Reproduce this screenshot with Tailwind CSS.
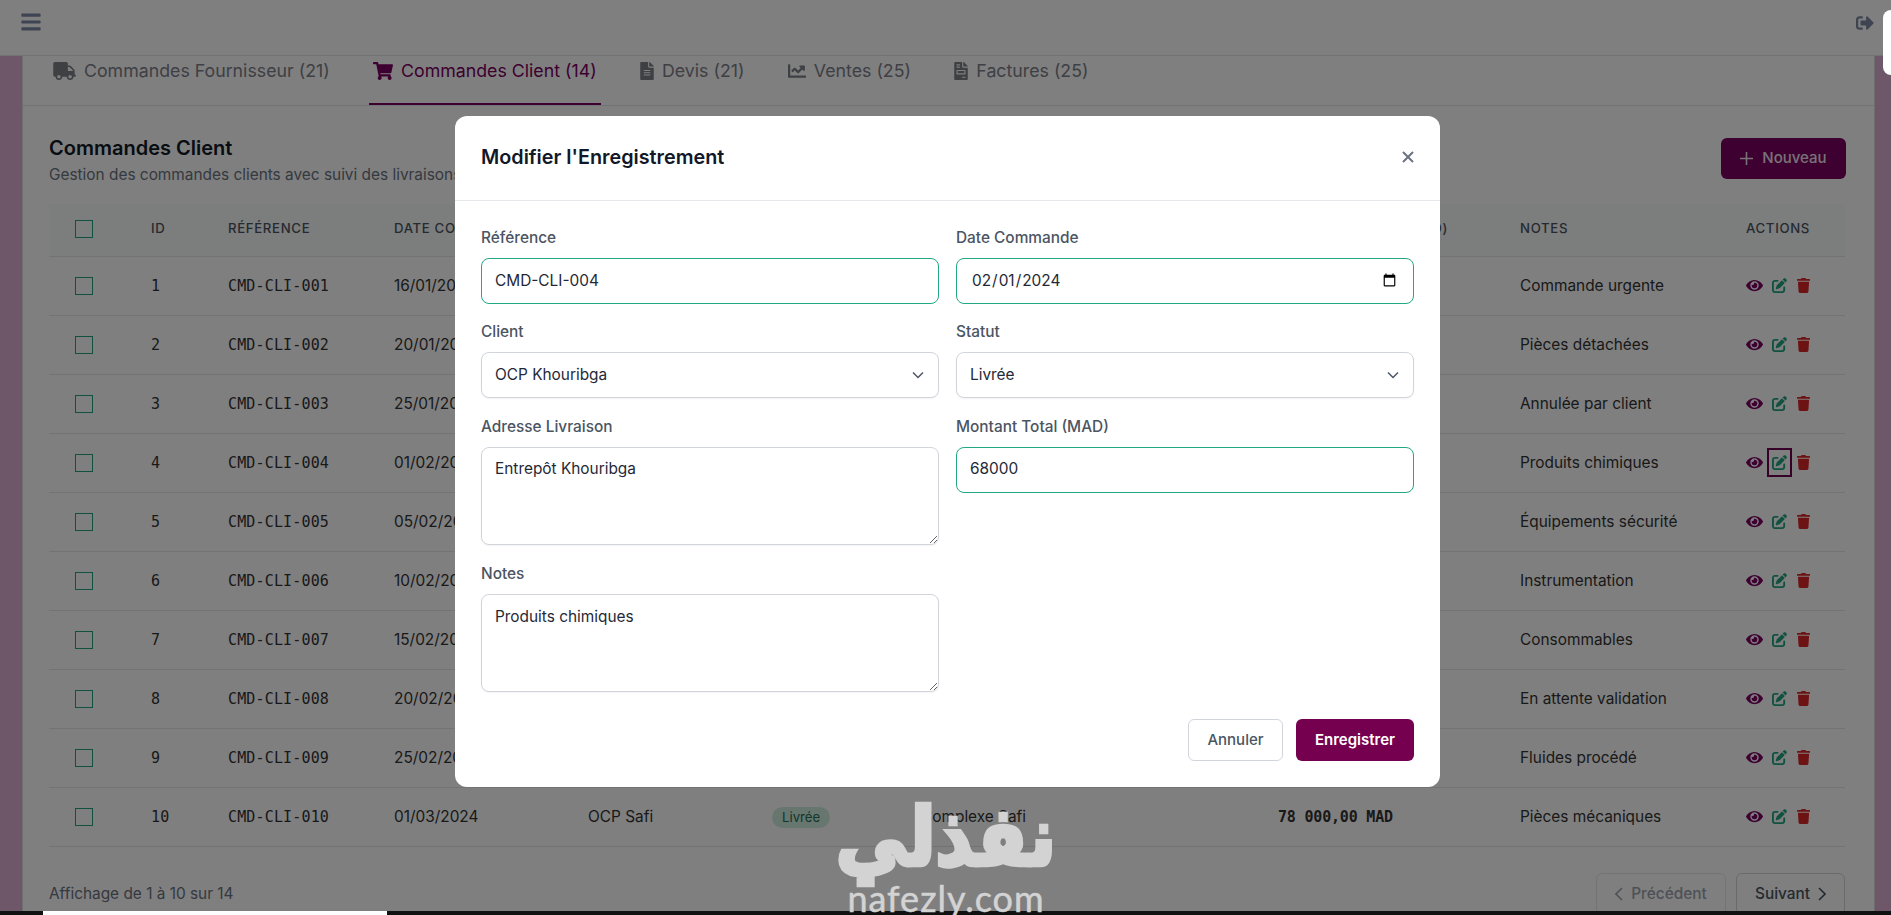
<!DOCTYPE html>
<html lang="fr">
<head>
    <meta charset="UTF-8">
    <meta name="viewport" content="width=device-width, initial-scale=1.0">
    <title>Commandes Client</title>
    <script src="https://cdn.jsdelivr.net/npm/@tailwindcss/browser@4"></script>
</head>
<body class="relative h-[915px] overflow-hidden bg-[#dcaed2] font-['Inter',sans-serif] text-[#374151]">
    <!-- icons -->
    <svg class="hidden">
        <symbol id="i-bars" viewBox="0 0 448 512"><path fill="currentColor" d="M16 132h416c8.837 0 16-7.163 16-16V76c0-8.837-7.163-16-16-16H16C7.163 60 0 67.163 0 76v40c0 8.837 7.163 16 16 16zm0 160h416c8.837 0 16-7.163 16-16v-40c0-8.837-7.163-16-16-16H16c-8.837 0-16 7.163-16 16v40c0 8.837 7.163 16 16 16zm0 160h416c8.837 0 16-7.163 16-16v-40c0-8.837-7.163-16-16-16H16c-8.837 0-16 7.163-16 16v40c0 8.837 7.163 16 16 16z"/></symbol>
        <symbol id="i-signout" viewBox="0 0 512 512"><path fill="currentColor" d="M497 273L329 441c-15 15-41 4.500-41-17v-96H152c-13.300 0-24-10.700-24-24v-96c0-13.300 10.700-24 24-24h136V88c0-21.400 25.900-32 41-17l168 168c9.300 9.400 9.300 24.600 0 34zM192 436v-40c0-6.600-5.400-12-12-12H96c-17.700 0-32-14.300-32-32V160c0-17.700 14.300-32 32-32h84c6.600 0 12-5.400 12-12V76c0-6.600-5.400-12-12-12H96c-53 0-96 43-96 96v192c0 53 43 96 96 96h84c6.600 0 12-5.400 12-12z"/></symbol>
        <symbol id="i-truck" viewBox="0 0 640 512"><path fill="currentColor" d="M624 352h-16V243.900c0-12.700-5.100-24.900-14.100-33.900L494 110.100c-9-9-21.200-14.100-33.900-14.100H416V48c0-26.500-21.500-48-48-48H48C21.500 0 0 21.500 0 48v320c0 26.500 21.500 48 48 48h16c0 53 43 96 96 96s96-43 96-96h128c0 53 43 96 96 96s96-43 96-96h48c8.800 0 16-7.200 16-16v-32c0-8.800-7.200-16-16-16zM160 464c-26.500 0-48-21.500-48-48s21.500-48 48-48 48 21.500 48 48-21.500 48-48 48zm320 0c-26.500 0-48-21.500-48-48s21.500-48 48-48 48 21.500 48 48-21.500 48-48 48zm80-208H416V144h44.100l99.900 99.900V256z"/></symbol>
        <symbol id="i-cart" viewBox="0 0 576 512"><path fill="currentColor" d="M528.120 301.319l47.273-208C578.806 78.301 567.391 64 551.990 64H159.208l-9.166-44.810C147.758 8.021 137.930 0 126.529 0H24C10.745 0 0 10.745 0 24v16c0 13.255 10.745 24 24 24h69.883l70.248 343.435C147.325 417.100 136 435.222 136 456c0 30.928 25.072 56 56 56s56-25.072 56-56c0-15.674-6.447-29.835-16.824-40h209.647C430.447 426.165 424 440.326 424 456c0 30.928 25.072 56 56 56s56-25.072 56-56c0-22.172-12.888-41.332-31.579-50.405l5.517-24.276c3.413-15.018-8.002-29.319-23.403-29.319H218.117l-6.545-32h293.145c11.206 0 20.920-7.754 23.403-18.681z"/></symbol>
        <symbol id="i-file" viewBox="0 0 384 512"><path fill="currentColor" d="M224 136V0H24C10.700 0 0 10.700 0 24v464c0 13.300 10.700 24 24 24h336c13.300 0 24-10.700 24-24V160H248c-13.200 0-24-10.800-24-24zm64 236c0 6.600-5.400 12-12 12H108c-6.600 0-12-5.400-12-12v-8c0-6.600 5.400-12 12-12h168c6.600 0 12 5.400 12 12v8zm0-64c0 6.600-5.400 12-12 12H108c-6.600 0-12-5.400-12-12v-8c0-6.600 5.400-12 12-12h168c6.600 0 12 5.400 12 12v8zm0-72v8c0 6.600-5.400 12-12 12H108c-6.600 0-12-5.400-12-12v-8c0-6.600 5.400-12 12-12h168c6.600 0 12 5.400 12 12zm96-114.100v6.100H256V0h6.100c6.400 0 12.500 2.500 17 7l97.900 98c4.500 4.500 7 10.600 7 16.900z"/></symbol>
        <symbol id="i-chart" viewBox="0 0 512 512"><path fill="currentColor" d="M496 384H64V80c0-8.840-7.160-16-16-16H16C7.160 64 0 71.160 0 80v336c0 17.670 14.330 32 32 32h464c8.840 0 16-7.160 16-16v-32c0-8.840-7.160-16-16-16zM464 96H345.940c-21.380 0-32.090 25.850-16.970 40.970l32.400 32.400L288 242.750l-73.370-73.370c-12.500-12.500-32.760-12.500-45.250 0l-68.690 68.690c-6.250 6.250-6.250 16.380 0 22.630l22.620 22.620c6.250 6.250 16.380 6.250 22.630 0L192 237.250l73.370 73.370c12.500 12.500 32.760 12.500 45.250 0l96-96 32.400 32.400c15.120 15.120 40.970 4.410 40.970-16.970V112c0-8.840-7.160-16-16-16z"/></symbol>
        <symbol id="i-invoice" viewBox="0 0 384 512"><path fill="currentColor" d="M288 256H96v64h192v-64zm89-151L279.100 7c-4.500-4.500-10.600-7-17-7H256v128h128v-6.100c0-6.300-2.500-12.400-7-16.900zm-153 31V0H24C10.700 0 0 10.700 0 24v464c0 13.300 10.700 24 24 24h336c13.300 0 24-10.700 24-24V160H248c-13.200 0-24-10.800-24-24zM64 72c0-4.420 3.580-8 8-8h80c4.420 0 8 3.580 8 8v16c0 4.420-3.580 8-8 8H72c-4.420 0-8-3.580-8-8V72zm0 64c0-4.420 3.580-8 8-8h80c4.420 0 8 3.580 8 8v16c0 4.420-3.580 8-8 8H72c-4.420 0-8-3.580-8-8v-16zm256 304c0 4.420-3.580 8-8 8h-80c-4.420 0-8-3.580-8-8v-16c0-4.420 3.580-8 8-8h80c4.420 0 8 3.580 8 8v16zm0-200v96c0 8.840-7.160 16-16 16H80c-8.840 0-16-7.160-16-16v-96c0-8.840 7.160-16 16-16h224c8.840 0 16 7.160 16 16z"/></symbol>
        <symbol id="i-eye" viewBox="0 0 576 512"><path fill="currentColor" d="M572.520 241.400C518.290 135.590 410.930 64 288 64S57.680 135.640 3.480 241.410a32.350 32.350 0 0 0 0 29.190C57.710 376.410 165.070 448 288 448s230.320-71.640 284.520-177.410a32.350 32.350 0 0 0 0-29.190zM288 400a144 144 0 1 1 144-144 143.930 143.930 0 0 1-144 144zm0-240a95.310 95.310 0 0 0-25.310 3.790 47.850 47.850 0 0 1-66.900 66.900A95.780 95.780 0 1 0 288 160z"/></symbol>
        <symbol id="i-edit" viewBox="0 0 512 512"><path fill="currentColor" d="M471.600 21.700c-21.900-21.900-57.300-21.900-79.200 0L362.300 51.700l97.900 97.900 30.100-30.100c21.900-21.900 21.900-57.300 0-79.200L471.600 21.700zm-299.200 220c-6.100 6.100-10.800 13.600-13.500 21.900l-29.600 88.800c-2.900 8.600-.6 18.100 5.800 24.600s15.900 8.700 24.600 5.800l88.800-29.600c8.200-2.700 15.700-7.400 21.900-13.500L437.700 172.300 339.700 74.300 172.400 241.700zM96 64C43 64 0 107 0 160V416c0 53 43 96 96 96H352c53 0 96-43 96-96V320c0-17.700-14.300-32-32-32s-32 14.300-32 32v96c0 17.700-14.300 32-32 32H96c-17.700 0-32-14.300-32-32V160c0-17.700 14.300-32 32-32h96c17.700 0 32-14.300 32-32s-14.300-32-32-32H96z"/></symbol>
        <symbol id="i-trash" viewBox="0 0 448 512"><path fill="currentColor" d="M432 32H312l-9.400-18.700A24 24 0 0 0 281.100 0H166.800a23.720 23.720 0 0 0-21.400 13.300L136 32H16A16 16 0 0 0 0 48v32a16 16 0 0 0 16 16h416a16 16 0 0 0 16-16V48a16 16 0 0 0-16-16zM53.200 467a48 48 0 0 0 47.900 45h245.800a48 48 0 0 0 47.900-45L416 128H32z"/></symbol>
    </svg>

    <!-- page behind the dialog -->
    <header class="h-[56px] bg-white border-b border-[#e5e5e5] flex items-start justify-between pl-[21px] pr-[17px]">
        <svg class="w-[20px] h-[22px] mt-[11px] text-[#7e88a4]"><use href="#i-bars"/></svg>
        <svg class="w-[18px] h-[18px] mt-[14px] text-[#7e88a4]"><use href="#i-signout"/></svg>
    </header>

    <main class="ml-[22px] w-[1853px] h-[859px] bg-white border-x border-[#dcdcdc]">
        <nav class="h-[50px] border-b border-[#e5e7eb] flex gap-[35.400px] pl-[26px]">
            <a class="flex items-start gap-[8px] px-1 pt-[3px] -mt-px h-[50px] text-[17.750px] text-[#7c8089]"><svg class="w-[23px] h-[18px] mt-[4px]"><use href="#i-truck"/></svg>Commandes Fournisseur (21)</a>
            <a class="flex items-start gap-[8px] px-1 pt-[3px] -mt-px h-[50px] text-[17.750px] text-[#7a0060] border-b-2 border-[#7a0060]"><svg class="w-[20px] h-[18px] mt-[4px]"><use href="#i-cart"/></svg>Commandes Client (14)</a>
            <a class="flex items-start gap-[8px] px-1 pt-[3px] -mt-px h-[50px] text-[17.750px] text-[#7c8089]"><svg class="w-[14px] h-[18px] mt-[4px]"><use href="#i-file"/></svg>Devis (21)</a>
            <a class="flex items-start gap-[8px] px-1 pt-[3px] -mt-px h-[50px] text-[17.750px] text-[#7c8089]"><svg class="w-[18px] h-[18px] mt-[4px]"><use href="#i-chart"/></svg>Ventes (25)</a>
            <a class="flex items-start gap-[8px] px-1 pt-[3px] -mt-px h-[50px] text-[17.750px] text-[#7c8089]"><svg class="w-[14px] h-[18px] mt-[4px]"><use href="#i-invoice"/></svg>Factures (25)</a>
        </nav>

        <section class="px-[26px] pt-[28px]">
            <div class="flex items-center justify-between mb-[19px] pr-[2px]">
                <div>
                    <h2 class="text-[20px] leading-[28px] font-semibold text-[#111827]">Commandes Client</h2>
                    <p class="mt-[3px] text-[15.400px] leading-[20px] text-[#6b7280]">Gestion des commandes clients avec suivi des livraisons</p>
                </div>
                <button class="h-[41px] w-[125px] mb-[2px] rounded-md bg-[#7a0060] text-white/90 text-[15px] font-medium flex items-center justify-center gap-[9px]">
                    <svg class="w-[13px] h-[13px]" viewBox="0 0 13 13" fill="none" stroke="currentColor" stroke-width="1.600"><path d="M6.500 0v13M0 6.500h13"/></svg>
                    Nouveau
                </button>
            </div>

            <table class="table-fixed w-[1796px] text-[15.400px] text-[#333333]">
                <colgroup>
                    <col class="w-[102px]"><col class="w-[77px]"><col class="w-[166px]"><col class="w-[194px]"><col class="w-[184px]"><col class="w-[149px]"><col class="w-[357px]"><col class="w-[242px]"><col class="w-[226px]"><col class="w-[99px]">
                </colgroup>
                <thead>
                    <tr class="h-[52px] bg-[#f9fafb] border-b border-[#e5e7eb] text-left text-[13.200px] uppercase tracking-[0.05em] text-[#4b5563]">
                        <th class="pl-[26px] pb-[2px]"><span class="block w-[18px] h-[18px] border border-[#22a37f]"></span></th>
                        <th class="font-medium pb-[2px]">ID</th>
                        <th class="font-medium pb-[2px]">Référence</th>
                        <th class="font-medium pb-[2px]">Date Commande</th>
                        <th class="font-medium pb-[2px]">Client</th>
                        <th class="font-medium pb-[2px]">Statut</th>
                        <th class="font-medium pb-[2px]">Adresse Livraison</th>
                        <th class="font-medium pb-[2px]">Montant Total (MAD)</th>
                        <th class="font-medium pb-[2px]">Notes</th>
                        <th class="font-medium pb-[2px]">Actions</th>
                    </tr>
                </thead>
                <tbody id="rows"></tbody>
            </table>

            <div class="mt-[26px] flex items-center justify-between pr-[3px]">
                <p class="text-[15.400px] text-[#6b7280]">Affichage de 1 à 10 sur 14</p>
                <div class="flex gap-[10px]">
                    <button class="h-[42px] w-[130px] rounded-md border border-[#e5e7eb] text-[15.400px] font-medium text-[#9ca3af] flex items-center justify-center gap-[8px]">
                        <svg class="w-[8px] h-[14px]" viewBox="0 0 8 14" fill="none" stroke="currentColor" stroke-width="1.600"><path d="M7 1 1 7l6 6"/></svg>
                        Précédent
                    </button>
                    <button class="h-[42px] w-[109px] rounded-md border border-[#d1d5db] text-[15.400px] font-medium text-[#4b5563] flex items-center justify-center gap-[8px]">
                        Suivant
                        <svg class="w-[8px] h-[14px]" viewBox="0 0 8 14" fill="none" stroke="currentColor" stroke-width="1.600"><path d="m1 1 6 6-6 6"/></svg>
                    </button>
                </div>
            </div>
        </section>
    </main>

    <!-- backdrop and dialog -->
    <div class="absolute inset-0 bg-black/50 flex justify-center items-start pt-[116px]">
        <div class="ml-[4px] w-[985px] h-[671px] rounded-xl bg-white">
            <div class="h-[85px] border-b border-[#e5e7eb] flex items-center justify-between pl-[26px] pr-[25px]">
                <h3 class="-mt-[1px] text-[19.800px] font-semibold text-[#111827]">Modifier l'Enregistrement</h3>
                <button class="-mt-[3px]">
                    <svg class="w-[14px] h-[14px] text-[#6b7280]" viewBox="0 0 14 14" fill="none" stroke="currentColor" stroke-width="2"><path d="m2 2 10 10M12 2 2 12"/></svg>
                </button>
            </div>
            <form class="px-[26px] pt-[27px]">
                <div class="grid grid-cols-2 gap-x-[17px] gap-y-[19px] items-start text-[15.400px] text-[#1f2937]">
                    <div>
                        <label class="block h-[20px] mb-[10px] text-[15.400px] leading-[20px] font-medium text-[#4b5563]">Référence</label>
                        <input type="text" value="CMD-CLI-004" class="block w-full h-[46px] pl-[13px] pr-[14px] pb-[1px] rounded-lg border border-[#22a884] bg-white">
                    </div>
                    <div>
                        <label class="block h-[20px] mb-[10px] text-[15.400px] leading-[20px] font-medium text-[#4b5563]">Date Commande</label>
                        <input type="date" value="2024-02-01" class="block w-full h-[46px] px-[14px] rounded-lg border border-[#22a884] bg-white">
                    </div>
                    <div class="-mt-px">
                        <label class="block h-[20px] mb-[10px] text-[15.400px] leading-[20px] font-medium text-[#4b5563]">Client</label>
                        <div class="relative">
                            <select class="block w-full h-[46px] pl-[13px] pr-[14px] pb-[1px] rounded-lg border border-[#d1d5db] bg-white shadow-xs appearance-none"><option>OCP Khouribga</option></select>
                            <svg class="absolute right-[15px] top-[19px] w-[12px] h-[8px] text-[#4b5563]" viewBox="0 0 12 8" fill="none" stroke="currentColor" stroke-width="1.500"><path d="m1 1.500 5 5 5-5"/></svg>
                        </div>
                    </div>
                    <div class="-mt-px">
                        <label class="block h-[20px] mb-[10px] text-[15.400px] leading-[20px] font-medium text-[#4b5563]">Statut</label>
                        <div class="relative">
                            <select class="block w-full h-[46px] pl-[13px] pr-[14px] pb-[1px] rounded-lg border border-[#d1d5db] bg-white shadow-xs appearance-none"><option>Livrée</option></select>
                            <svg class="absolute right-[15px] top-[19px] w-[12px] h-[8px] text-[#4b5563]" viewBox="0 0 12 8" fill="none" stroke="currentColor" stroke-width="1.500"><path d="m1 1.500 5 5 5-5"/></svg>
                        </div>
                    </div>
                    <div>
                        <label class="block h-[20px] mb-[10px] text-[15.400px] leading-[20px] font-medium text-[#4b5563]">Adresse Livraison</label>
                        <textarea class="block w-full h-[98px] pl-[13px] pr-[14px] py-[9px] rounded-lg border border-[#d1d5db] bg-white shadow-xs">Entrepôt Khouribga</textarea>
                    </div>
                    <div>
                        <label class="block h-[20px] mb-[10px] text-[15.400px] leading-[20px] font-medium text-[#4b5563]">Montant Total (MAD)</label>
                        <input type="number" value="68000" class="block w-full h-[46px] pl-[13px] pr-[14px] pb-[3px] rounded-lg border border-[#22a884] bg-white">
                    </div>
                    <div>
                        <label class="block h-[20px] mb-[10px] text-[15.400px] leading-[20px] font-medium text-[#4b5563]">Notes</label>
                        <textarea class="block w-full h-[98px] pl-[13px] pr-[14px] py-[10px] rounded-lg border border-[#d1d5db] bg-white shadow-xs">Produits chimiques</textarea>
                    </div>
                </div>
                <div class="mt-[27px] flex justify-end gap-[13px]">
                    <button type="button" class="h-[42px] w-[95px] rounded-md border border-[#d1d5db] bg-white text-[15px] font-medium text-[#4b5563]">Annuler</button>
                    <button type="button" class="h-[42px] w-[118px] rounded-md bg-[#760050] text-[15px] font-semibold text-white">Enregistrer</button>
                </div>
            </form>
        </div>
    </div>

    <!-- bits of the screen capture around the window -->
    <div class="absolute right-0 top-[10px] w-[8px] h-[65px] rounded-l-lg bg-white"></div>
    <div class="absolute left-0 right-0 bottom-0 h-[4px] bg-[#111111]"><div class="ml-[43px] w-[344px] h-full bg-white"></div></div>

    <!-- watermark -->
    <div class="absolute left-[836px] top-[783px] w-[220px] text-center text-[#d3d3d3]">
        <p class="font-['DejaVu_Sans',sans-serif] font-bold text-[72px] leading-[96px] origin-top scale-y-[1.120] [-webkit-text-stroke:4px_#d3d3d3]" dir="rtl">نفذلي</p>
        <p class="mt-[1px] font-['Lato',sans-serif] text-[36px] leading-[36px] tracking-[1px] [-webkit-text-stroke:0.500px_#d3d3d3]">nafezly.com</p>
    </div>

    <script>
        const rows = [
            ['1', 'CMD-CLI-001', '16/01/2024', 'OCP Jorf Lasfar', 'Jorf Lasfar', '125\u202f000,00 MAD', 'Commande urgente'],
            ['2', 'CMD-CLI-002', '20/01/2024', 'Managem', 'Site Hajar', '45\u202f000,00 MAD', 'Pièces détachées'],
            ['3', 'CMD-CLI-003', '25/01/2024', 'Cosumar', 'Usine Casablanca', '32\u202f000,00 MAD', 'Annulée par client'],
            ['4', 'CMD-CLI-004', '01/02/2024', 'OCP Khouribga', 'Entrepôt Khouribga', '68\u202f000,00 MAD', 'Produits chimiques'],
            ['5', 'CMD-CLI-005', '05/02/2024', 'Lafarge', 'Usine Bouskoura', '54\u202f000,00 MAD', 'Équipements sécurité'],
            ['6', 'CMD-CLI-006', '10/02/2024', 'Samir', 'Raffinerie Mohammedia', '91\u202f000,00 MAD', 'Instrumentation'],
            ['7', 'CMD-CLI-007', '15/02/2024', 'Sonasid', 'Usine Jorf', '27\u202f000,00 MAD', 'Consommables'],
            ['8', 'CMD-CLI-008', '20/02/2024', 'Ciments du Maroc', 'Usine Safi', '39\u202f000,00 MAD', 'En attente validation'],
            ['9', 'CMD-CLI-009', '25/02/2024', 'ONEE', 'Centrale Kénitra', '61\u202f000,00 MAD', 'Fluides procédé'],
            ['10', 'CMD-CLI-010', '01/03/2024', 'OCP Safi', 'Complexe Safi', '78\u202f000,00 MAD', 'Pièces mécaniques'],
        ];
        document.getElementById('rows').innerHTML = rows.map(r => `
            <tr class="h-[59px] border-b border-[#e5e7eb]">
                <td class="pl-[26px]"><span class="block w-[18px] h-[18px] border border-[#22a37f]"></span></td>
                <td class="pt-[2px] font-['DejaVu_Sans_Mono',monospace] text-[15px] tracking-[0.150px]">${r[0]}</td>
                <td class="pt-[2px] font-['DejaVu_Sans_Mono',monospace] text-[15px] tracking-[0.150px]">${r[1]}</td>
                <td>${r[2]}</td>
                <td>${r[3]}</td>
                <td><span class="inline-flex items-center h-[21px] px-[10px] rounded-full bg-[#cfeee0] text-[#1f6f55] text-[13.200px]">Livrée</span></td>
                <td>${r[4]}</td>
                <td class="pt-[2px] font-['DejaVu_Sans_Mono',monospace] text-[15px] font-bold tracking-[-0.200px]">${r[5]}</td>
                <td class="pt-[1px]">${r[6]}</td>
                <td>
                    <div class="flex items-center">
                        <svg class="w-[17px] h-[15px] text-[#7a0060]"><use href="#i-eye"/></svg>
                        <span class="ml-[9px] block"><span class="block ${r[0] === '4' ? 'px-[3px] py-[5px] -mx-[3px] -my-[5px] outline-2 outline-[#6d0050]' : ''}"><svg class="block w-[15px] h-[15px] text-[#22a37f]"><use href="#i-edit"/></svg></span></span>
                        <svg class="ml-[10px] w-[13px] h-[15px] text-[#dc2626]"><use href="#i-trash"/></svg>
                    </div>
                </td>
            </tr>`).join('');
    </script>
</body>
</html>
